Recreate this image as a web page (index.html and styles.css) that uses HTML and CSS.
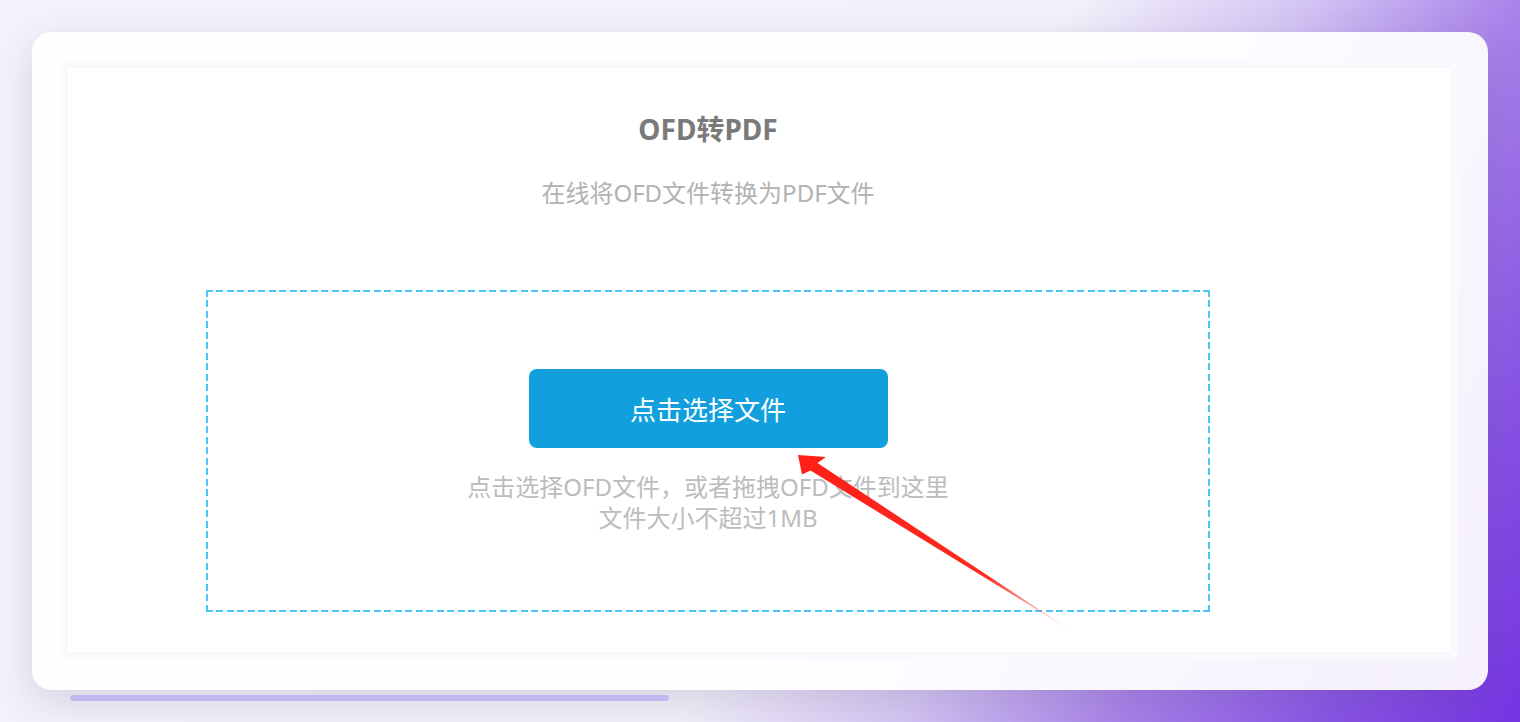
FILE: index.html
```html
<!DOCTYPE html>
<html lang="zh-CN">
<head>
<meta charset="utf-8">
<title>OFD转PDF</title>
<link rel="stylesheet" href="styles.css">
</head>
<body>
<div class="page">
  <div class="card">
    <div class="panel">
      <div class="content">
        <h1 class="title">OFD转PDF</h1>
        <p class="subtitle">在线将OFD文件转换为PDF文件</p>
        <div class="dropzone">
          <button class="pick-btn" type="button">点击选择文件</button>
          <p class="hint">点击选择OFD文件，或者拖拽OFD文件到这里<br>文件大小不超过1MB</p>
        </div>
      </div>
    </div>
  </div>
  <div class="scrollbar"></div>
  <svg class="arrow" width="1520" height="722" viewBox="0 0 1520 722" xmlns="http://www.w3.org/2000/svg">
    <defs>
      <linearGradient id="arrowFade" x1="798" y1="455" x2="1070" y2="630" gradientUnits="userSpaceOnUse">
        <stop offset="0" stop-color="#ff1f17"/>
        <stop offset="0.7" stop-color="#ff2920"/>
        <stop offset="1" stop-color="#ff6a6a" stop-opacity="0.15"/>
      </linearGradient>
    </defs>
    <polygon fill="url(#arrowFade)" points="798,455 826,457 817.5,463 1070,630 810.5,470.5 802,474.5"/>
  </svg>
</div>
</body>
</html>
```

FILE: styles.css
```css
html, body {
  margin: 0;
  padding: 0;
}

body {
  width: 1520px;
  height: 722px;
  overflow: hidden;
  position: relative;
  background: linear-gradient(119deg, #f4f2fc 0%, #f3f1fb 56%, #d4c5f4 68%, #a983ea 79%, #8a55e6 90%, #7634e3 100%);
  font-family: "Noto Sans", "Noto Sans CJK SC", sans-serif;
}

.page {
  padding: 32px 32px 0 32px;
}

.card {
  height: 658px;
  box-sizing: border-box;
  padding: 29px 30px 31px 29px;
  border-radius: 20px;
  background: rgba(255, 255, 255, 0.93);
  box-shadow: 0 12px 40px rgba(60, 50, 90, 0.16);
}

.panel {
  height: 100%;
  box-sizing: border-box;
  border: 6px solid rgba(240, 238, 248, 0.35);
  box-shadow: inset 0 0 0 1px rgba(238, 236, 246, 0.5);
  background: #ffffff;
}

.content {
  width: 1282px;
  padding-top: 42px;
  text-align: center;
}

.title {
  margin: 0;
  font-size: 28px;
  line-height: 40px;
  font-weight: 700;
  color: #7a7a7a;
}

.subtitle {
  margin: 28px 0 0;
  font-size: 24px;
  line-height: 32px;
  color: #b2b2b2;
}

.dropzone {
  width: 1004px;
  height: 322px;
  box-sizing: border-box;
  margin: 81px auto 0;
  padding: 79px 0 0;
  display: flex;
  flex-direction: column;
  align-items: center;
  background:
    repeating-linear-gradient(90deg, #47c6fb 0 7px, transparent 7px 10.5px) left top / 100% 2px no-repeat,
    repeating-linear-gradient(90deg, #47c6fb 0 7px, transparent 7px 10.5px) left bottom / 100% 2px no-repeat,
    repeating-linear-gradient(180deg, #47c6fb 0 7px, transparent 7px 10.5px) left top / 2px 100% no-repeat,
    repeating-linear-gradient(180deg, #47c6fb 0 7px, transparent 7px 10.5px) right top / 2px 100% no-repeat;
}

.pick-btn {
  width: 359px;
  height: 79px;
  border: 0;
  border-radius: 8px;
  background: #119fdd;
  color: #ffffff;
  font-family: inherit;
  font-size: 26px;
  padding: 0;
}

.hint {
  margin: 23px 0 0;
  font-size: 24px;
  line-height: 31px;
  color: #bcbcbc;
}

.scrollbar {
  margin: 5px 0 0 38px;
  width: 599px;
  height: 6px;
  border-radius: 3px;
  background: #c2b8ef;
}

.arrow {
  position: absolute;
  left: 0;
  top: 0;
  pointer-events: none;
}
```
